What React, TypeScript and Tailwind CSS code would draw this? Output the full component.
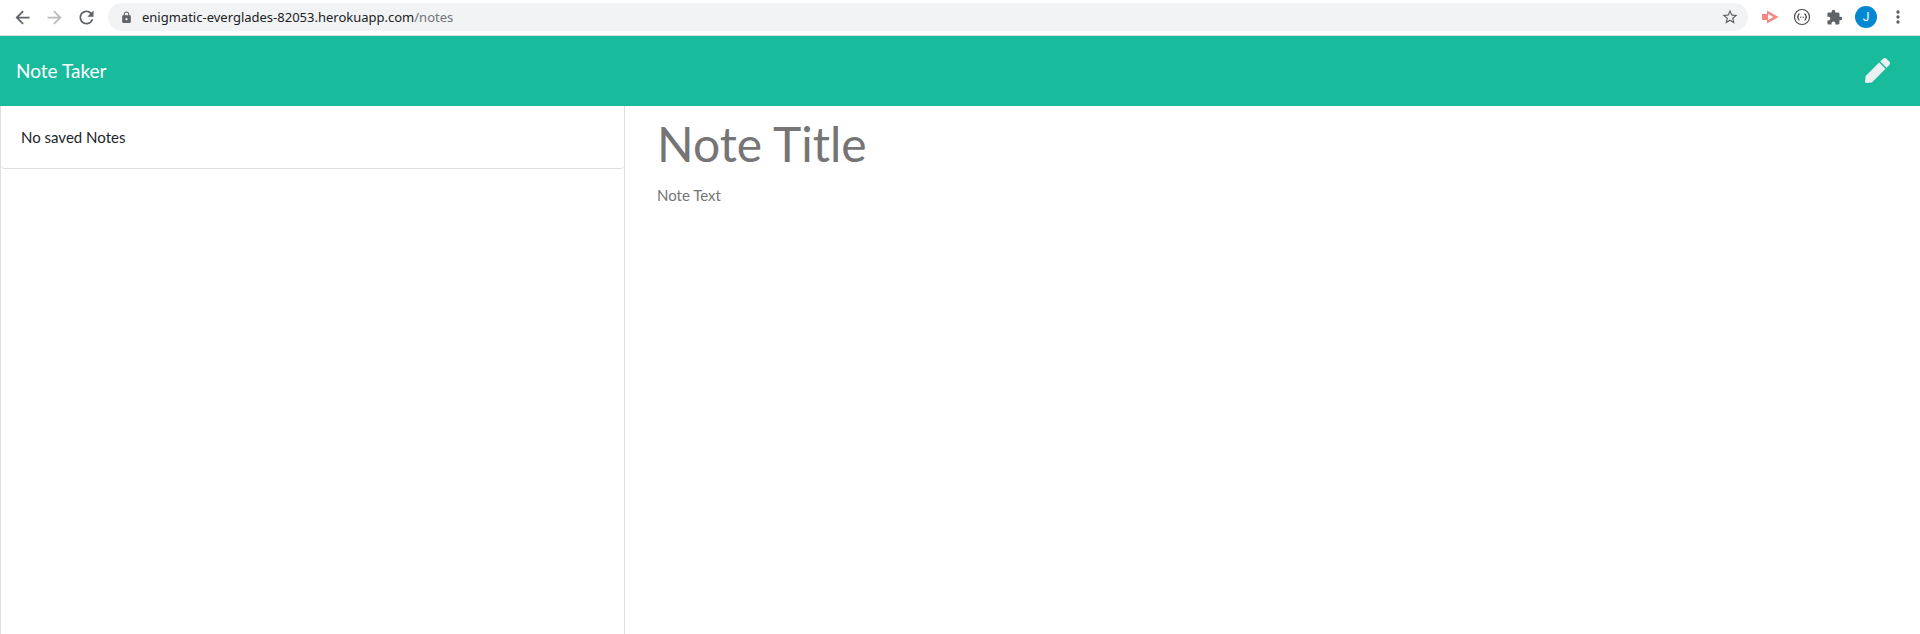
import { FaPen } from "react-icons/fa";
import {
  MdArrowBack,
  MdArrowForward,
  MdExtension,
  MdLock,
  MdMoreVert,
  MdRefresh,
  MdStarBorder,
} from "react-icons/md";

function CastIcon() {
  return (
    <svg width="18" height="16" viewBox="0 0 18 16" aria-hidden="true">
      <path d="M6 1.5 17.5 8 6 14.5Z" fill="#fb8583" />
      <path d="M7 5 12.5 8 7 11Z" fill="#fff" />
      <path d="M1 5h5v6H1Z" fill="#fb8583" />
    </svg>
  );
}

function BracesIcon() {
  return (
    <svg width="18" height="18" viewBox="0 0 18 18" fill="none" stroke="#4b4b4b" aria-hidden="true">
      <circle cx="9" cy="9" r="7.5" strokeWidth="1.2" />
      <path
        d="M6.5 6Q5.2 6 5.2 7.5T4 9Q5.2 9 5.2 10.5T6.5 12M11.5 6Q12.8 6 12.8 7.5T14 9Q12.8 9 12.8 10.5T11.5 12"
        strokeWidth="1.3"
      />
      <path d="M7 9.2h1M8.6 9.2h.8M10 9.2h1" />
    </svg>
  );
}

function BrowserBar() {
  const button = "flex h-8 w-8 items-center justify-center text-[#5f6368]";
  return (
    <div className="flex h-9 items-center border-b border-[#dadce0] bg-white px-1.5 pb-px">
      <button type="button" aria-label="Back" className={button}>
        <MdArrowBack size={21} />
      </button>
      <button
        type="button"
        aria-label="Forward"
        disabled
        className="flex h-8 w-8 items-center justify-center text-[#bababa]"
      >
        <MdArrowForward size={21} />
      </button>
      <button type="button" aria-label="Reload" className={button}>
        <MdRefresh size={21} />
      </button>
      <div className="ml-1.5 flex h-7 flex-1 items-center rounded-full bg-[#f1f3f4] pr-[9px] pl-3">
        <MdLock size={13} className="text-[#5f6368]" />
        <a
          href="/notes"
          className="ml-[9px] flex-1 font-['Noto_Sans','Open_Sans',sans-serif] text-[13px] leading-5 text-[#202124]"
        >
          enigmatic-everglades-82053.herokuapp.com<span className="text-[#70757a]">/notes</span>
        </a>
        <button type="button" aria-label="Bookmark this page" className="text-[#5f6368]">
          <MdStarBorder size={18} />
        </button>
      </div>
      <div className="ml-1.5 flex items-center">
        <button type="button" aria-label="Screen capture" className={button}>
          <CastIcon />
        </button>
        <button type="button" aria-label="JSON formatter" className={button}>
          <BracesIcon />
        </button>
        <button type="button" aria-label="Extensions" className={button}>
          <MdExtension size={17} />
        </button>
        <button type="button" aria-label="Profile" className="flex h-8 w-8 items-center justify-center">
          <span className="flex h-[22px] w-[22px] items-center justify-center rounded-full bg-[#0288d1] font-['Roboto',sans-serif] text-xs text-white">
            J
          </span>
        </button>
        <button type="button" aria-label="Menu" className={button}>
          <MdMoreVert size={20} />
        </button>
      </div>
    </div>
  );
}

export default function App() {
  return (
    <div className="flex min-h-screen flex-col bg-white font-['Lato',sans-serif] text-[15px] text-[#212529]">
      <BrowserBar />
      <nav className="flex h-[70px] items-center justify-between bg-[#18bc9c] pr-[30px] pl-4">
        <a href="/" className="text-[19px] text-white">
          Note Taker
        </a>
        <button type="button" aria-label="New note" className="pb-0.5 text-[#ecf0f1]">
          <FaPen size={25} />
        </button>
      </nav>
      <main className="flex flex-1">
        <aside className="w-[625px] max-w-1/3 shrink-0 border-x border-[#dfdfdf]">
          <ul className="rounded-b border-b border-[#dfdfdf]">
            <li className="px-5 py-5 leading-[22px]">No saved Notes</li>
          </ul>
        </aside>
        <form className="flex min-w-0 flex-1 flex-col pr-4 pl-8">
          <input
            type="text"
            aria-label="Note Title"
            placeholder="Note Title"
            className="mb-1 h-[74px] w-full text-5xl placeholder:text-[#757575] focus:outline-none"
          />
          <textarea
            aria-label="Note Text"
            placeholder="Note Text"
            className="w-full flex-1 resize-none leading-[22px] placeholder:text-[#757575] focus:outline-none"
          />
        </form>
      </main>
    </div>
  );
}
